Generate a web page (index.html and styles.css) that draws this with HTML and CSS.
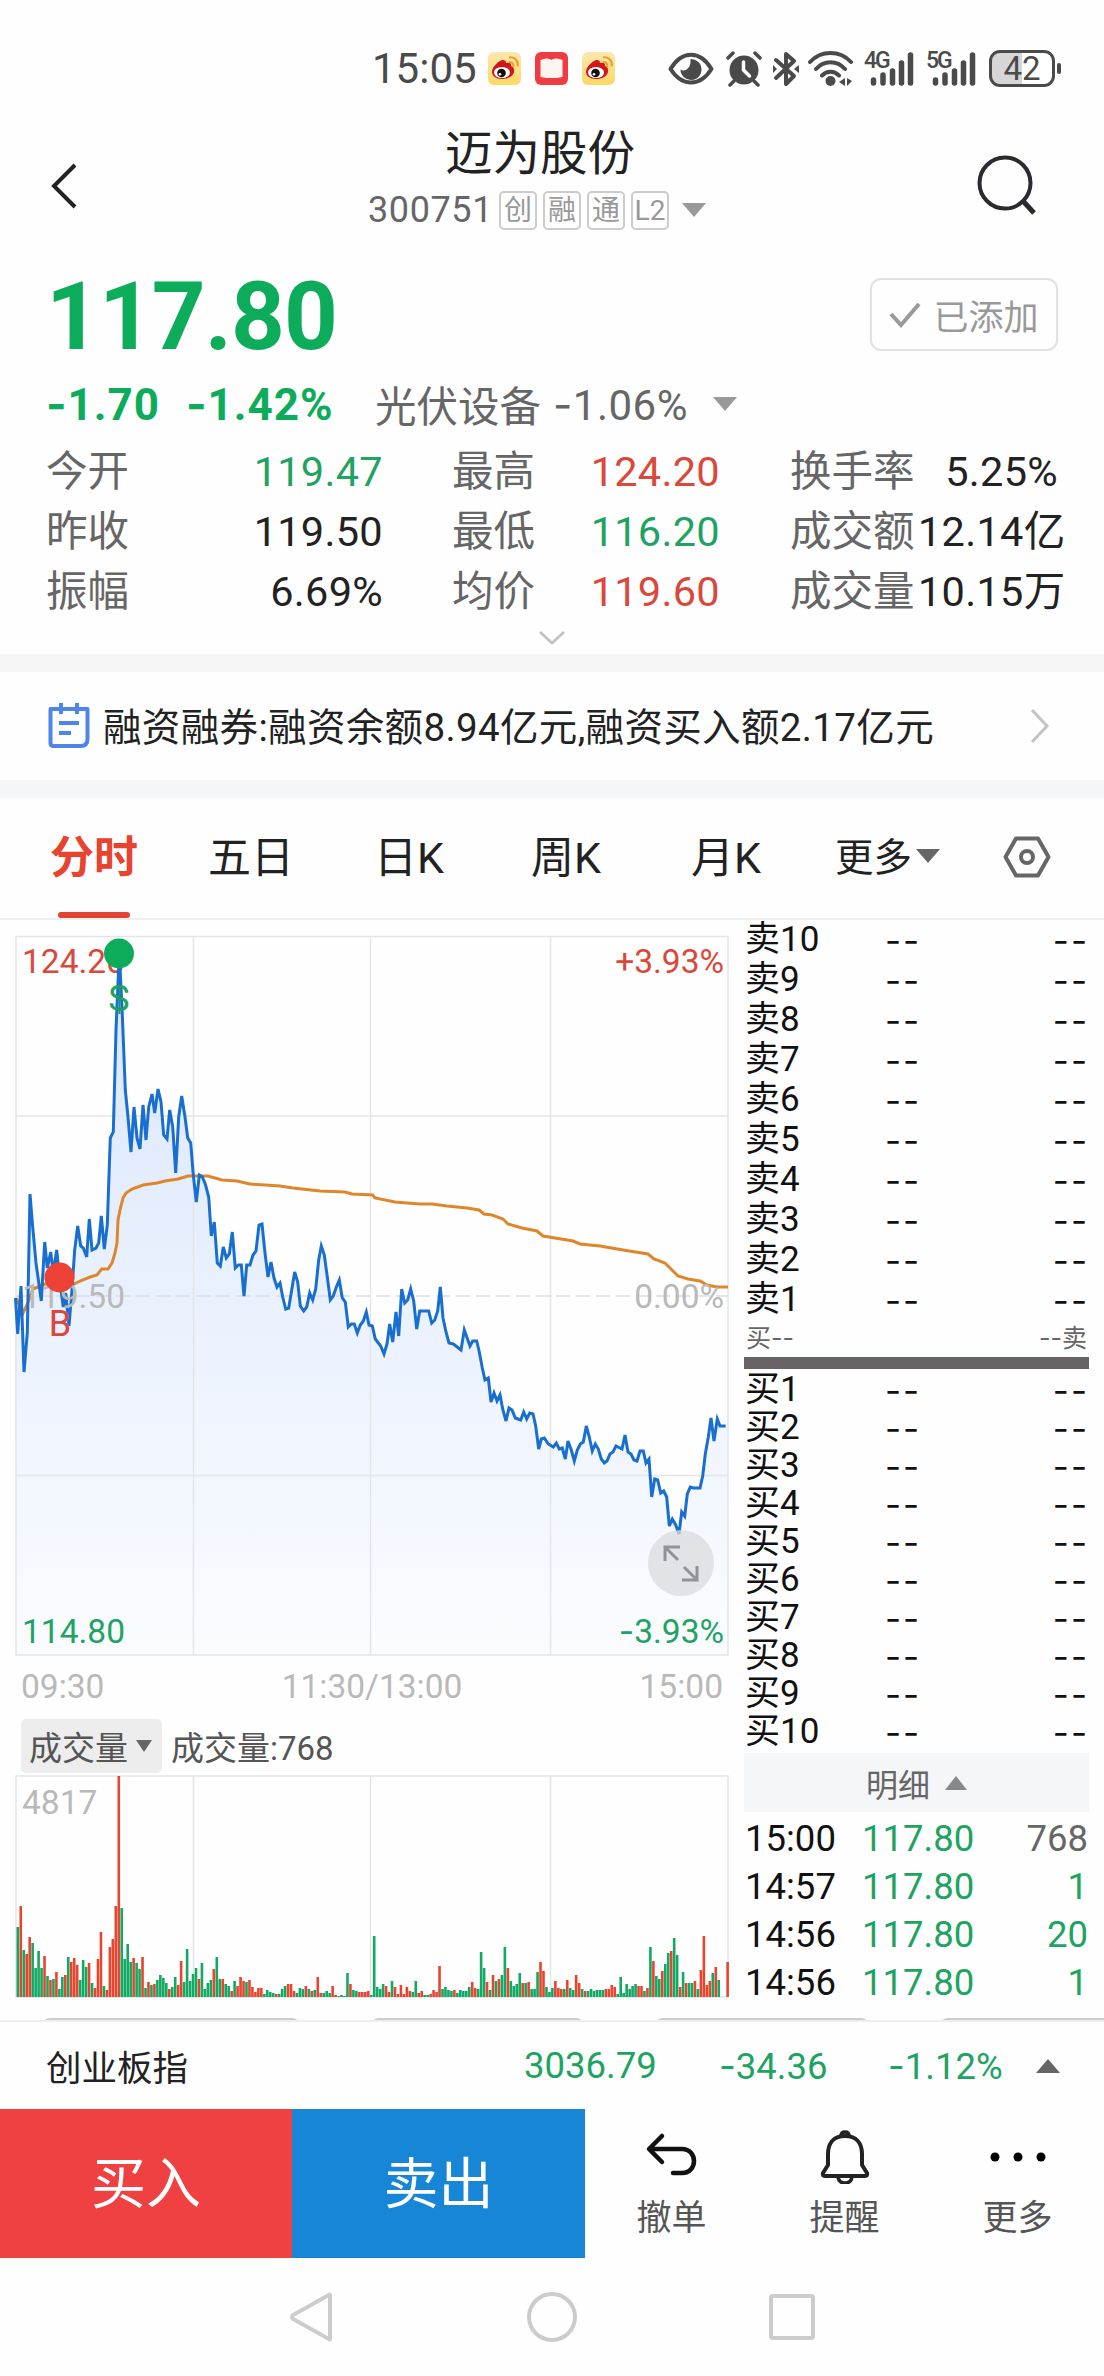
FILE: index.html
```html
<!DOCTYPE html>
<html lang="zh-CN">
<head>
    <meta charset="utf-8">
    <title>迈为股份 300751</title>
    <link rel="stylesheet" href="styles.css">
</head>
<body>
    <svg width="0" height="0" class="defs">
        <defs>
            <linearGradient id="gold" x1="0" y1="0" x2="0" y2="1">
                <stop offset="0" stop-color="#fbe7b0"/>
                <stop offset="1" stop-color="#fbd964"/>
            </linearGradient>
            <symbol id="weibo" viewBox="0 0 33 33">
                <rect width="33" height="33" rx="6" fill="url(#gold)"/>
                <path d="M4 20c0-5 7-12 11-12 2 0 3 1 3 3 3-1 6 0 5 3 6 2 4 13-9 13C8 27 4 24 4 20z" fill="#d3161b"/>
                <ellipse cx="14" cy="20.500" rx="8" ry="5.500" fill="#fff"/>
                <circle cx="13.500" cy="21" r="4.300" fill="#111"/>
                <circle cx="12" cy="22.300" r="1.300" fill="#fff"/>
                <path d="M21 10c3-.5 5 2 4 5M21 5.500c6-1 10 4 8.500 9" fill="none" stroke="#f09a2a" stroke-width="2"/>
            </symbol>
            <symbol id="signal" viewBox="0 0 51 35">
                <path d="M9.500 29v3M19 24v8M28.500 20v12M37.500 12v20M46.500 4v28" stroke="#4a4a4a" stroke-width="5.500" stroke-linecap="round"/>
            </symbol>
        </defs>
    </svg>

    <div class="status">
        <span class="clock">15:05</span>
        <svg class="app" width="33" height="33"><use href="#weibo"/></svg>
        <svg class="app" width="33" height="33" viewBox="0 0 33 33">
            <rect width="33" height="33" rx="6" fill="#f03c40"/>
            <path d="M5.500 8c4-2 8-2 11 0 3-2 7-2 11 0v17c-4 1-8 1-11 1s-7 0-11-1z" fill="#fff5f0"/>
        </svg>
        <svg class="app" width="33" height="33"><use href="#weibo"/></svg>
        <svg class="eye" width="46" height="34" viewBox="0 0 46 34">
            <path d="M2.500 17C14-2 32-2 43.500 17 32 35 14 35 2.500 17z" fill="none" stroke="#4a4a4a" stroke-width="4" stroke-linejoin="round"/>
            <path d="M22.500 7a10.500 10.500 0 1 1-10 10.500c4 3 11-1 10-10.500z" fill="#4a4a4a"/>
        </svg>
        <svg class="alarm" width="36" height="36" viewBox="0 0 36 36">
            <circle cx="18" cy="19" r="14.500" fill="#4a4a4a"/>
            <path d="M2 7l5-5M34 7l-5-5M8 30l-4 4M28 30l4 4" stroke="#4a4a4a" stroke-width="3.500" stroke-linecap="round"/>
            <path d="M17.500 11v8l6 6" stroke="#fff" stroke-width="3.500" fill="none" stroke-linecap="round"/>
        </svg>
        <svg class="bt" width="26" height="36" viewBox="0 0 26 36">
            <path d="M3 9l18 16-8 8V3l8 7L3 27" fill="none" stroke="#4a4a4a" stroke-width="4" stroke-linejoin="round" stroke-linecap="round"/>
            <path d="M0 14l4 4-4 4zM26 14l-5 4 5 4z" fill="#4a4a4a"/>
        </svg>
        <svg class="wifi" width="46" height="36" viewBox="0 0 46 36">
            <path d="M2 11C13-1 32-1 43 11M8 18c8-9 21-9 29 0M14 24.500c5-5 12-5 17 0" fill="none" stroke="#4a4a4a" stroke-width="4" stroke-linecap="round"/>
            <circle cx="22.500" cy="30" r="5" fill="#4a4a4a"/>
            <path d="M37 27v8l-6-4zM39 27l5 3-5 5z" fill="#4a4a4a"/>
        </svg>
        <div class="net"><span>4G</span><svg width="51" height="35"><use href="#signal"/></svg></div>
        <div class="net net2"><span>5G</span><svg width="51" height="35"><use href="#signal"/></svg></div>
        <div class="battery">42</div>
        <i class="battery-tip"></i>
    </div>

    <div class="header">
        <svg class="back" width="28" height="48" viewBox="0 0 28 48"><path d="M25 3L4 24l21 21" fill="none" stroke="#222" stroke-width="4"/></svg>
        <div class="title">
            <h1>迈为股份</h1>
            <div class="code">
                <span class="num">300751</span>
                <span class="tag">创</span>
                <span class="tag">融</span>
                <span class="tag">通</span>
                <span class="tag">L2</span>
                <i class="caret"></i>
            </div>
        </div>
        <svg class="search" width="62" height="62" viewBox="0 0 62 62"><circle cx="28" cy="28" r="25.500" fill="none" stroke="#2a2a30" stroke-width="4"/><path d="M46 46l11 12" stroke="#2a2a30" stroke-width="5"/></svg>
    </div>

    <div class="quote">
        <div class="price-row">
            <span class="price">117.80</span>
            <div class="added">
                <svg width="32" height="28" viewBox="0 0 32 28"><path d="M2 13l10 11L30 3" fill="none" stroke="#999" stroke-width="4"/></svg>
                <span>已添加</span>
            </div>
        </div>
        <div class="change-row">
            <span class="chg"><span class="neg">-</span>1.70</span>
            <span class="pct"><span class="neg">-</span>1.42%</span>
            <span class="sector">光伏设备</span>
            <span class="sector-pct"><span class="neg">-</span>1.06%</span>
            <i class="caret"></i>
        </div>
        <div class="stats">
            <span>今开</span><b class="green">119.47</b><span>最高</span><b class="red">124.20</b><span>换手率</span><b>5.25%</b>
            <span>昨收</span><b>119.50</b><span>最低</span><b class="green">116.20</b><span>成交额</span><b>12.14亿</b>
            <span>振幅</span><b>6.69%</b><span>均价</span><b class="red">119.60</b><span>成交量</span><b>10.15万</b>
        </div>
        <svg class="expand" width="28" height="16" viewBox="0 0 28 16"><path d="M2 2l12 11L26 2" fill="none" stroke="#c4c4c4" stroke-width="3"/></svg>
    </div>

    <div class="notice">
        <svg width="42" height="48" viewBox="0 0 42 48">
            <path d="M2.500 7h37v30q0 7-7 7h-27q-3 0-3-3z" fill="none" stroke="#4d86e8" stroke-width="4" stroke-linejoin="round"/>
            <path d="M13 1v11M29 1v11M11 21h20M11 31h12" stroke="#4d86e8" stroke-width="4"/>
        </svg>
        <span class="notice-text">融资融券:融资余额8.94亿元,融资买入额2.17亿元</span>
        <svg class="arrow" width="20" height="36" viewBox="0 0 20 36"><path d="M2 2l15 16L2 34" fill="none" stroke="#c4c4c4" stroke-width="3"/></svg>
    </div>

    <div class="tabs">
        <span class="tab active">分时</span>
        <span class="tab">五日</span>
        <span class="tab">日K</span>
        <span class="tab">周K</span>
        <span class="tab">月K</span>
        <span class="tab more">更多<i class="caret dark"></i></span>
        <svg class="setting" width="48" height="42" viewBox="0 0 48 42"><path d="M13 2.500h22L45.500 21 35 39.500H13L2.500 21z" fill="none" stroke="#666" stroke-width="4" stroke-linejoin="round"/><circle cx="24" cy="21" r="6" fill="none" stroke="#666" stroke-width="4"/></svg>
    </div>

    <div class="main">
        <div class="charts">
            <svg class="price-chart" width="740" height="739" viewBox="0 920 740 739">
                <defs>
                    <linearGradient id="fade" x1="0" y1="936" x2="0" y2="1655" gradientUnits="userSpaceOnUse">
                        <stop offset="0" stop-color="#d9e6fb"/>
                        <stop offset="0.600" stop-color="#edf3fe"/>
                        <stop offset="1" stop-color="#fafcff"/>
                    </linearGradient>
                </defs>
                <polygon id="area" fill="url(#fade)"/>
                <path class="grid" d="M16 936.500H728V1655H16zM193.500 936V1655M370.500 936V1655M550.500 936V1655M16 1116H728M16 1475.500H728"/>
                <path class="grid dash" d="M16 1296H728"/>
                <text class="red" x="22" y="973">124.20</text>
                <text class="red" x="724" y="973" text-anchor="end">+3.93%</text>
                <text class="green" x="22" y="1643">114.80</text>
                <text class="green" x="724" y="1643" text-anchor="end"><tspan class="neg">-</tspan>3.93%</text>
                <polyline id="avgLine" class="avg"/>
                <polyline id="priceLine" class="line"/>
                <text class="mid" x="22" y="1308">119.50</text>
                <text class="mid" x="724" y="1308" text-anchor="end">0.00%</text>
                <circle cx="119" cy="953.500" r="15" fill="#0dac5b"/>
                <text class="mark green" x="119" y="1011" text-anchor="middle">S</text>
                <path d="M119.500 985v29" stroke="#139a6a" stroke-width="2"/>
                <circle cx="59.500" cy="1277.500" r="15" fill="#ee4136"/>
                <text class="mark red" x="60" y="1336" text-anchor="middle">B</text>
                <circle cx="681" cy="1563" r="33" fill="#d9dbde" opacity="0.750"/>
                <path d="M665 1561v-14h15M666 1548l12 12M697 1566v14h-15M696 1579l-12-12" fill="none" stroke="#8f9399" stroke-width="3"/>
            </svg>
            <div class="axis"><span>09:30</span><span>11:30/13:00</span><span>15:00</span></div>
            <div class="vol-head">
                <span class="vol-tag">成交量<i class="caret dark"></i></span>
                <span>成交量:768</span>
            </div>
            <svg class="vol-chart" width="740" height="223" viewBox="0 1775 740 223">
                <path class="grid" d="M16 1776H728V1997H16zM193.500 1776V1997M370.500 1776V1997M550.500 1776V1997"/>
                <text class="mid" x="22" y="1814">4817</text>
                <g id="volBars"></g>
            </svg>
        </div>
        <div class="book">
            <div id="sells" class="sells"></div>
            <div class="ratio"><span>买<span class="neg">--</span></span><span><span class="neg">--</span>卖</span></div>
            <div class="ratio-bar"></div>
            <div id="buys" class="buys"></div>
            <div class="detail">明细<i class="caret up"></i></div>
            <div class="trade"><span>15:00</span><b class="green">117.80</b><em>768</em></div>
            <div class="trade"><span>14:57</span><b class="green">117.80</b><em class="green">1</em></div>
            <div class="trade"><span>14:56</span><b class="green">117.80</b><em class="green">20</em></div>
            <div class="trade"><span>14:56</span><b class="green">117.80</b><em class="green">1</em></div>
        </div>
    </div>
    <div class="chips"><i></i><i></i><i></i><i></i></div>

    <div class="index-bar">
        <span class="index-name">创业板指</span>
        <span class="index-num">3036.79</span>
        <span class="index-num"><span class="neg">-</span>34.36</span>
        <span class="index-num"><span class="neg">-</span>1.12%</span>
        <i class="caret up dark"></i>
    </div>

    <div class="actions">
        <div class="buy">买入</div>
        <div class="sell">卖出</div>
        <div class="act">
            <svg width="54" height="54" viewBox="0 0 54 54"><path d="M17 6L4 19l13 13M5 19h32c16 0 16 24 0 24h-9" fill="none" stroke="#111" stroke-width="4.500" stroke-linecap="round" stroke-linejoin="round"/></svg>
            <span>撤单</span>
        </div>
        <div class="act">
            <svg width="54" height="54" viewBox="0 0 54 54"><path d="M27 6c-12 0-17 8-17 18v11l-5 8q-1 3 2 3h40q3 0 2-3l-5-8V24c0-10-5-18-17-18z" fill="none" stroke="#222" stroke-width="4"/><path d="M23 6q0-4 4-4t4 4M20 47q1 6 7 6t7-6" fill="none" stroke="#222" stroke-width="3.500"/></svg>
            <span>提醒</span>
        </div>
        <div class="act">
            <svg width="56" height="54" viewBox="0 0 56 54"><circle cx="5" cy="27" r="4.500"/><circle cx="28" cy="27" r="4.500"/><circle cx="51" cy="27" r="4.500"/></svg>
            <span>更多</span>
        </div>
    </div>

    <div class="nav">
        <svg width="44" height="52" viewBox="0 0 44 52"><path d="M41 4v44q0 1-1 0L4 28q-2-2 0-4L40 4q1-1 1 0z" fill="none" stroke="#ccc" stroke-width="4"/></svg>
        <svg width="52" height="52" viewBox="0 0 52 52"><circle cx="26" cy="26" r="23" fill="none" stroke="#ccc" stroke-width="4"/></svg>
        <svg width="46" height="46" viewBox="0 0 46 46"><rect x="2" y="2" width="42" height="42" rx="2" fill="none" stroke="#ccc" stroke-width="4"/></svg>
    </div>

    <script src="chart.js"></script>
</body>
</html>
```
FILE: styles.css
```css
* {
    box-sizing: border-box;
}

body {
    margin: 0;
    width: 1104px;
    height: 2376px;
    overflow: hidden;
    background: #fefefe;
    color: #222;
    font-family: Roboto, "Noto Sans CJK SC", sans-serif;
}

b, em, i {
    font-weight: normal;
    font-style: normal;
}

svg {
    display: block;
    flex: none;
}

.defs {
    position: absolute;
}

.neg {
    font-family: Inter, sans-serif;
}

.green {
    color: #1ea362;
    fill: #1ea362;
}

.red {
    color: #d9483b;
    fill: #d9483b;
}

.caret {
    display: inline-block;
    flex: none;
    border: 12px solid transparent;
    border-top: 14px solid #999;
    border-bottom: 0;
}

.caret.dark {
    border-top-color: #666;
}

.caret.up {
    border-top: 0;
    border-bottom: 14px solid #888;
}

/* status bar */
.status {
    display: flex;
    align-items: center;
    height: 101px;
    padding: 36px 0 0 372px;
    color: #4a4a4a;
}

.clock {
    width: 116px;
    font-size: 42px;
}

.app {
    margin-right: 14px;
}

.eye {
    margin-left: 39px;
}

.alarm {
    margin-left: 12px;
}

.bt {
    margin-left: 11px;
}

.wifi {
    margin-left: 9px;
}

.net {
    position: relative;
    margin-left: 10px;
}

.net2 {
    margin-left: 11px;
}

.net span {
    position: absolute;
    left: 0;
    top: -2px;
    font-size: 23px;
    line-height: 23px;
    font-weight: 500;
    letter-spacing: -2px;
}

.battery {
    width: 66px;
    height: 37px;
    margin-left: 12px;
    border: 3px solid #4a4a4a;
    border-radius: 11px;
    background: linear-gradient(to right, #d6d6d6 50%, #fff 50%);
    font-size: 33px;
    line-height: 32px;
    text-align: center;
}

.battery-tip {
    width: 4px;
    height: 11px;
    margin-left: 2px;
    border-radius: 2px;
    background: #4a4a4a;
}

/* header */
.header {
    display: flex;
    align-items: flex-start;
    height: 165px;
    padding-left: 50px;
}

.back {
    margin-top: 61px;
}

.title {
    width: 904px;
    padding-left: 290px;
}

.title h1 {
    margin: 21px 0 0 77px;
    font-size: 47.500px;
    line-height: 64px;
    font-weight: normal;
}

.code {
    display: flex;
    align-items: center;
    height: 44px;
    margin-top: 2px;
    gap: 6px;
}

.num {
    width: 125px;
    font-size: 36px;
    letter-spacing: 0.6px;
    color: #666;
}

.tag {
    width: 38px;
    height: 39px;
    border: 2px solid #ccc;
    border-radius: 5px;
    color: #999;
    font-size: 28px;
    line-height: 35px;
    text-align: center;
    display: flex;
    justify-content: center;
}

.code .caret {
    margin-left: 7px;
}

.search {
    margin-top: 54px;
    margin-left: -5px;
}

/* quote */
.quote {
    height: 388px;
    padding: 0 46px;
}

.price-row {
    display: flex;
    justify-content: space-between;
    align-items: center;
    padding-top: 3px;
    height: 94px;
}

.price {
    padding-top: 4px;
    color: #0dac5b;
    font-size: 94px;
    line-height: 94px;
    letter-spacing: -1px;
    font-weight: bold;
}

.added {
    display: flex;
    align-items: center;
    justify-content: center;
    gap: 12px;
    width: 188px;
    height: 73px;
    border: 2px solid #e2e2e2;
    border-radius: 11px;
    color: #999;
    font-size: 35px;
}

.change-row {
    display: flex;
    align-items: center;
    height: 60px;
    margin-top: 14px;
    font-size: 42px;
    letter-spacing: 0.5px;
    color: #666;
}

.chg, .pct {
    width: 140px;
    color: #0dac5b;
    font-size: 44px;
    font-weight: bold;
    letter-spacing: 1px;
}

.pct {
    width: 189px;
}

.sector {
    width: 178px;
    font-size: 41.500px;
    letter-spacing: 0;
}

.sector-pct {
    width: 160px;
}

.stats {
    display: grid;
    grid-template-columns: 110px 227px 178px 159px 198px 140px;
    margin-top: 8px;
    font-size: 41.500px;
    line-height: 60px;
}

.stats span {
    color: #666;
    white-space: nowrap;
}

.stats b {
    text-align: right;
    white-space: nowrap;
    letter-spacing: 0.3px;
}

.stats span:nth-child(6n+3) {
    padding-left: 69px;
}

.stats span:nth-child(6n+5) {
    padding-left: 70px;
}

.expand {
    margin: 8px auto 0;
}

/* notice */
.notice {
    display: flex;
    align-items: center;
    height: 144px;
    padding: 0 54px 0 48px;
    border-top: 18px solid #f6f6f6;
    border-bottom: 18px solid #f5f6f8;
}

.notice-text {
    margin: -4px 0 0 13px;
    font-size: 38.500px;
    letter-spacing: 0.35px;
    white-space: nowrap;
}

.arrow {
    margin-left: auto;
}

/* tabs */
.tabs {
    display: grid;
    grid-template-columns: 158px 166px 157px 160px 144px 168px 60px;
    align-items: center;
    height: 122px;
    padding-left: 50px;
    border-bottom: 2px solid #eee;
}

.tab {
    position: relative;
    height: 120px;
    font-size: 43px;
    line-height: 120px;
}

.tab.active {
    color: #e8432f;
    font-size: 44px;
    font-weight: bold;
}

.tab.active::after {
    content: "";
    position: absolute;
    left: 8px;
    bottom: 0;
    width: 72px;
    height: 6px;
    border-radius: 3px;
    background: #df4434;
}

.tab.more {
    font-size: 38.500px;
}

.tab .caret {
    margin-left: 4px;
    vertical-align: 8px;
}

.setting {
    margin-top: -2px;
}

/* charts and order book */
.main {
    display: flex;
    height: 1098px;
}

.charts {
    width: 744px;
}

.grid {
    fill: none;
    stroke: #e4e5e9;
    stroke-width: 1.500px;
}

.dash {
    stroke: #dcdde2;
    stroke-dasharray: 14 6;
}

.line {
    fill: none;
    stroke: #186fd0;
    stroke-width: 3px;
}

.avg {
    fill: none;
    stroke: #e0862a;
    stroke-width: 3px;
}

.price-chart text, .vol-chart text {
    font-size: 33.500px;
}

.price-chart .mark {
    font-size: 36px;
}

.mid {
    fill: #b9b9b9;
}

.axis {
    display: flex;
    justify-content: space-between;
    width: 723px;
    height: 56px;
    padding-left: 21px;
    color: #b9b9b9;
    font-size: 33.500px;
    line-height: 56px;
}

.vol-head {
    display: flex;
    align-items: center;
    gap: 9px;
    height: 60px;
    padding: 2px 0 0 21px;
    color: #555;
    font-size: 33px;
}

.vol-tag {
    display: flex;
    align-items: center;
    gap: 8px;
    width: 141px;
    height: 54px;
    padding-left: 8px;
    border-radius: 5px;
    background: #ededed;
}

.vol-tag .caret {
    border-width: 12px 8.500px 0;
}

.book {
    width: 345px;
    color: #111;
}

.row {
    display: grid;
    grid-template-columns: 140px 1fr auto;
    align-items: center;
    height: 38px;
    padding: 0 0 0 1px;
    font-size: 35px;
    line-height: 38px;
}

.sells .row {
    height: 40px;
}

.row .neg {
    letter-spacing: 2px;
}

.ratio {
    display: flex;
    justify-content: space-between;
    height: 37px;
    padding: 0 2px;
    color: #666;
    font-size: 25px;
    line-height: 37px;
}

.ratio-bar {
    height: 12px;
    margin-bottom: 2px;
    background: #676365;
}

.detail {
    display: flex;
    align-items: center;
    justify-content: center;
    gap: 15px;
    height: 59px;
    margin: 2px 0;
    background: #f5f6f8;
    color: #666;
    font-size: 32px;
}

.detail .caret {
    border-width: 0 11px 14px;
}

.trade {
    display: grid;
    grid-template-columns: 117px 130px 1fr;
    height: 48px;
    padding: 0 1px;
    font-size: 36.500px;
    line-height: 49px;
}

.trade em {
    text-align: right;
}

.trade em:not(.green) {
    color: #666;
}

/* tops of the chips hidden under the index bar */
.chips {
    display: grid;
    grid-template-columns: 258px 213px 214px 180px;
    gap: 71px;
    height: 4px;
    padding-left: 42px;
    overflow: hidden;
    border-bottom: 2px solid #eee;
}

.chips i {
    height: 40px;
    border: 2px solid #ccc;
    border-radius: 8px;
}

.index-bar {
    display: flex;
    align-items: center;
    height: 87px;
    padding-left: 46px;
    font-size: 35.500px;
}

.index-name {
    width: 478px;
}

.index-num {
    width: 195px;
    color: #1ea362;
    font-size: 36.500px;
}

.index-num + .index-num {
    width: 169px;
}

.index-num + .index-num + .index-num {
    width: 148px;
}

.index-bar .caret {
    border-bottom-color: #666;
}

.actions {
    display: flex;
    height: 149px;
}

.buy, .sell {
    width: 292px;
    background: #ef4141;
    color: #fff;
    font-size: 55px;
    line-height: 150px;
    text-align: center;
}

.sell {
    width: 293px;
    background: #1886d6;
}

.act {
    display: flex;
    flex-direction: column;
    align-items: center;
    width: 173px;
    padding-top: 21px;
    color: #555;
    font-size: 35px;
    line-height: 50px;
}

.act span {
    margin-top: 10px;
}

.nav {
    display: flex;
    align-items: center;
    height: 118px;
    padding-left: 289px;
}

.nav svg:nth-child(2) {
    margin-left: 193px;
}

.nav svg:nth-child(3) {
    margin-left: 191px;
}
```
FILE: chart.js
```js
// price line, one x,y pair per tick
var price = "15.5,1298 17.7,1334 21,1286 24,1372 27.3,1333 30,1194 32.7,1227 36,1263 41.3,1301 44.7,1242 47.3,1268 50.7,1252 53.3,1273 56.7,1250 60,1283 63.3,1307 65.7,1293 69,1326 71.7,1293 74.7,1250 77.7,1226 80.7,1246 83.3,1248 86.7,1257 89.3,1219 92,1250 96,1248 98.7,1243 101.3,1216 104.3,1249 107.3,1225 110.3,1138 113.3,1132 116,1030 119.3,953 122,1007 125.3,1090 128,1117 131,1152 134,1107 137,1138 140,1149 143,1105 146,1140 148.7,1107 152,1094 154.7,1113 158,1089 161,1102 163.7,1135 167,1139 169.7,1110 172.7,1127 175.7,1173 178.7,1117 181.7,1096 185,1117 187.7,1138 190.7,1143 193.3,1175 196.3,1202 199.3,1175 202.3,1177 205.3,1184 208.7,1197 211.3,1236 214.3,1222 217.3,1263 220.3,1266 223.3,1247 226.3,1258 229.3,1254 232.3,1232 235.3,1268 238.3,1265 241.3,1265 244,1296 246.7,1265 250,1265 253,1255 256,1251 259,1225 262,1224 265,1253 268,1277 271,1262 274,1278 277,1287 280,1283 282.7,1297 285.7,1309 288.7,1308 291.7,1290 294.7,1272 297.7,1282 300.3,1306 303.7,1311 306.7,1307 309.7,1293 312.7,1300 315.7,1289 318.7,1260 321.3,1246 324.3,1255 327.3,1277 330.3,1300 333.3,1296 336.3,1287 339.3,1280 342.3,1298 345.3,1302 348.3,1327 351.3,1324 354.3,1324 357.3,1333 360.3,1325 363.3,1321 366.3,1312 369,1325 372.3,1326 375.3,1339 380.7,1346 384,1354 387,1344 389.7,1324 392.7,1342 396,1312 398.7,1336 401.7,1289 404.7,1303 407.7,1300 410.7,1289 413.7,1301 416.7,1329 419.7,1311 428.7,1311 431.7,1323 434.7,1320 437.7,1311 440.3,1287 443,1318 446,1332 449,1343 453.3,1344 461,1350 464.3,1330 470,1346 472.7,1341 476.7,1341 479.3,1352 482.3,1368 485,1380 488.3,1378 491,1402 494,1393 497,1401 500,1395 502.7,1409 506,1421 509,1408 512,1410 515.3,1418 520.7,1420 523.7,1412 526.7,1419 529.7,1413 533,1414 535.7,1426 538.7,1449 541.3,1439 544.3,1438 548.3,1444 553.3,1447 556.3,1443 559.3,1449 562.3,1448 565.3,1459 568,1441 571.3,1450 574.3,1461 577.3,1450 580.3,1444 583.3,1442 586.3,1426 589.3,1437 592.3,1451 595.3,1444 598.3,1449 601.3,1459 604.3,1463 607,1461 610,1454 613,1452 616,1446 622,1449 625,1435 628,1452 631,1454 634,1460 637,1461 640,1451 643.3,1451 646,1463 649,1459 651.7,1497 654.7,1479 657.7,1480 660.7,1493 663.7,1491 666.7,1497 669.3,1526 672.3,1519 675.7,1525 679,1534 681.7,1512 684.7,1516 687.3,1494 690.3,1487 693.3,1488 700,1488 702.7,1476 705.3,1454 708.3,1437 711,1418 714,1441 717.3,1419 720,1426 725.7,1426";

var avg = "16,1298 23,1313 27,1305 33,1289 45,1284 74,1284 80,1281 90,1277 97,1275 101.7,1269 108,1269 112,1263 115,1253 117,1243 118,1220 120,1210 123,1198 126,1193 132,1189 143,1185 157,1183 165,1181 178,1179 188,1176 208,1176 222,1180 237,1181 250,1184 280,1186 293,1188 320,1191 345,1192 352,1194 372.7,1195 375,1198 395,1202 420,1204 432,1204 447,1206 467,1208 479,1210 484,1214 492,1215 503,1219 508,1224 522,1228 537,1231 543,1236 573,1241 580,1244 600,1246 623,1250 648,1254 654,1259 665,1263 673,1271 678,1276 688,1279 700,1281 707,1285 717,1287 728,1287";

document.getElementById('priceLine').setAttribute('points', price);
document.getElementById('area').setAttribute('points', price + ' 728,1426 728,1655 16,1655');
document.getElementById('avgLine').setAttribute('points', avg);

// volume per minute, r = up, g = down
var volume = "g70 r91 g47 r43 r60 g54 g29 g46 g29 r41 g21 r17 g18 r25 g8 g20 r22 g40 r35 r39 r32 g17 g37 g30 r34 g14 r9 r38 r65 g11 r7 r50 r58 r91 r221 g89 g38 g53 g35 r39 g34 g28 r40 g9 r15 g12 r13 g17 g22 g19 g14 r8 g10 g20 r12 r36 g15 g48 g16 g23 g29 r18 g34 g8 g14 g17 r28 g40 g18 r18 g13 g11 r6 g16 r11 r20 r16 g15 r17 r10 r5 r9 r9 g3 g7 g5 g4 r3 g3 g8 g11 r13 r13 r6 g4 g9 g8 r11 g8 r6 g7 r20 r4 g4 g6 g4 r11 r2 g1 g2 g1 g24 r13 g7 g6 r5 r5 r5 r6 g2 g61 g10 g8 g13 r11 r5 g16 r10 r3 r12 r3 r10 r6 g5 g16 r4 r6 g2 g2 r3 r7 r5 r31 g8 g10 g7 g6 r7 g4 g7 g6 g6 g10 r15 r9 g8 g45 g29 r15 g7 r22 g16 r18 g22 g50 r29 g16 g11 g13 g24 r14 g14 r15 g8 g8 g25 r35 r26 g10 g5 g9 r16 r9 r8 g8 r17 g9 g7 r22 r14 g8 r6 g6 g8 g6 g7 g7 g7 r8 r8 r12 r10 g3 g20 g4 g13 g8 g11 g13 r11 r11 g6 r9 g50 r36 g21 g18 r26 g33 g44 r46 g59 g42 r10 g25 r14 g14 g14 r16 g8 r27 r61 r12 r16 g24 r30 g17 g0 g0 r35";

var bars = '';
volume.split(' ').forEach(function (v, i) {
    var h = Number(v.slice(1));
    var color = v[0] == 'r' ? '#e8452f' : '#12a962';
    bars += '<rect x="' + (16.5 + i * 2.97).toFixed(2) + '" y="' + (1997 - h) + '" width="2.6" height="' + h + '" fill="' + color + '"/>';
});
document.getElementById('volBars').innerHTML = bars;

// order book rows
function addRow(id, label) {
    var row = document.createElement('div');
    row.className = 'row';
    row.innerHTML = '<span>' + label + '</span><span class="neg">--</span><span class="neg">--</span>';
    document.getElementById(id).appendChild(row);
}
for (var i = 10; i >= 1; i--) {
    addRow('sells', '卖' + i);
}
for (var j = 1; j <= 10; j++) {
    addRow('buys', '买' + j);
}
```
